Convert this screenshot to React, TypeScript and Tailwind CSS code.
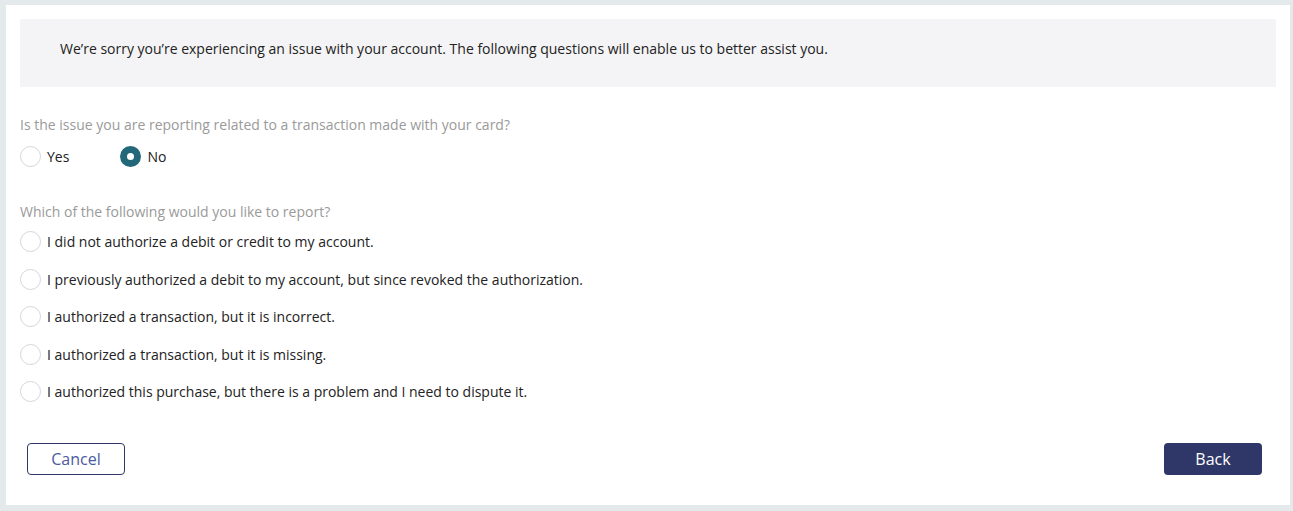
import React, { useState } from "react";

const reportOptions = [
  "I did not authorize a debit or credit to my account.",
  "I previously authorized a debit to my account, but since revoked the authorization.",
  "I authorized a transaction, but it is incorrect.",
  "I authorized a transaction, but it is missing.",
  "I authorized this purchase, but there is a problem and I need to dispute it.",
];

function Radio({ checked, label, onClick }: { checked: boolean; label: string; onClick: () => void }) {
  return (
    <label className="flex items-center gap-[6px] cursor-pointer" onClick={onClick}>
      {checked ? (
        <span className="w-[21px] h-[21px] rounded-full bg-[#23687a] flex items-center justify-center">
          <span className="w-[7px] h-[7px] rounded-full bg-white" />
        </span>
      ) : (
        <span className="w-[21px] h-[21px] rounded-full border border-[#d3d6da] bg-white" />
      )}
      <span className="text-[14px] text-[#222]">{label}</span>
    </label>
  );
}

export default function App() {
  const [card, setCard] = useState("no");
  const [report, setReport] = useState<number | null>(null);

  return (
    <div className="min-h-[511px] bg-[#e4e9ec] pt-[5px] pb-[6px] pl-[6px] pr-[3px] font-['Open_Sans',sans-serif]">
      <div className="bg-white h-[500px] px-[14px] pt-[14px] flex flex-col">
        {/* INTRO */}
        <div className="bg-[#f4f4f6] h-[68px] pl-[40px] flex items-center">
          <p className="text-[14px] text-[#222] pb-[10px]">
            We’re sorry you’re experiencing an issue with your account. The following questions will enable us to better assist you.
          </p>
        </div>

        {/* CARD QUESTION */}
        <p className="mt-[27px] text-[14px] text-[#9a9a9a]">Is the issue you are reporting related to a transaction made with your card?</p>
        <div className="flex gap-[51px] mt-[11px]">
          <Radio checked={card === "yes"} label="Yes" onClick={() => setCard("yes")} />
          <Radio checked={card === "no"} label="No" onClick={() => setCard("no")} />
        </div>

        {/* REPORT QUESTION */}
        <p className="mt-[34px] text-[14px] text-[#9a9a9a]">Which of the following would you like to report?</p>
        <div className="flex flex-col gap-[16.5px] mt-[9px]">
          {reportOptions.map((o, i) => (
            <Radio key={i} checked={report === i} label={o} onClick={() => setReport(i)} />
          ))}
        </div>

        {/* ACTIONS */}
        <div className="flex justify-between mt-[41px] px-[7px] pr-[14px]">
          <button className="w-[98px] h-[32px] rounded-[4px] border border-[#2e3768] text-[#4a5a9e] text-[16px]">Cancel</button>
          <button className="w-[98px] h-[32px] rounded-[4px] bg-[#2e3768] text-white text-[16px]">Back</button>
        </div>
      </div>
    </div>
  );
}
